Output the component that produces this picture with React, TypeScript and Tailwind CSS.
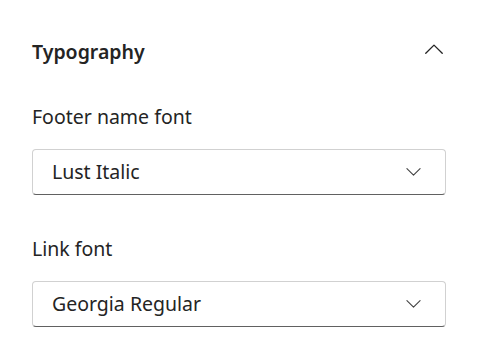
function Chevron({ up = false, className = '' }: { up?: boolean; className?: string }) {
  return (
    <svg viewBox="0 0 16 9" fill="none" className={className} aria-hidden="true">
      <path
        d={up ? 'M0.6 8.4 L8 1 L15.4 8.4' : 'M0.6 0.6 L8 8 L15.4 0.6'}
        stroke="currentColor"
        strokeWidth={1.2}
        strokeLinecap="round"
        strokeLinejoin="round"
      />
    </svg>
  );
}

function FontSelect({ label, value }: { label: string; value: string }) {
  return (
    <div className="flex flex-col">
      <span className="text-[19.5px] leading-[28px] text-[#242424]">{label}</span>
      <button
        type="button"
        className="mt-[18px] flex h-[46px] items-center justify-between rounded-[4px] border border-[#d1d1d1] border-b-[#616161] bg-white pl-[19px] pr-[24px] text-left"
      >
        <span className="text-[19.5px] leading-[26px] text-[#242424]">{value}</span>
        <Chevron className="h-[8px] w-[15px] text-[#424242]" />
      </button>
    </div>
  );
}

export default function App() {
  return (
    <div
      className="min-h-screen w-[478px] bg-white px-[32px] pt-[38px]"
      style={{ fontFamily: '"Noto Sans", "Open Sans", sans-serif' }}
    >
      <div className="flex items-center justify-between">
        <h2 className="text-[19.5px] font-semibold leading-[28px] text-[#242424]">Typography</h2>
        <Chevron up className="mr-[3px] -mt-[7px] h-[10px] w-[18px] text-[#242424]" />
      </div>
      <div className="mt-[37px] flex flex-col gap-[40px]">
        <FontSelect label="Footer name font" value="Lust Italic" />
        <FontSelect label="Link font" value="Georgia Regular" />
      </div>
    </div>
  );
}
